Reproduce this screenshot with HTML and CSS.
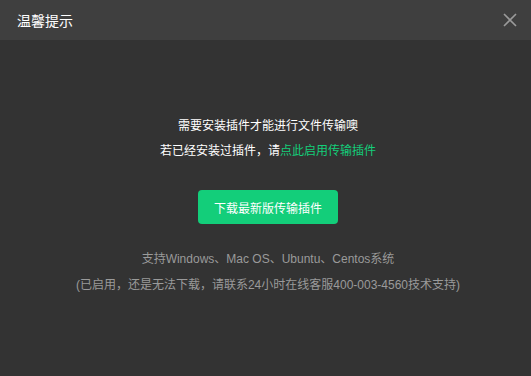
FILE: index.html
```html
<!DOCTYPE html>
<html lang="zh-CN">
<head>
    <meta charset="UTF-8">
    <meta name="viewport" content="width=device-width, initial-scale=1.0">
    <title>温馨提示</title>
    <link rel="stylesheet" href="styles.css">
</head>
<body>
    <div class="dialog">
        <div class="dialog-header">
            <span class="dialog-title">温馨提示</span>
            <span class="dialog-close">
                <svg width="14" height="14" viewBox="0 0 14 14">
                    <path d="M1 1L13 13M13 1L1 13" stroke="#9a9a9a" stroke-width="1.6" fill="none"/>
                </svg>
            </span>
        </div>
        <div class="dialog-body">
            <p class="tip">需要安装插件才能进行文件传输噢</p>
            <p class="tip">若已经安装过插件，请<a class="link" href="#">点此启用传输插件</a></p>
            <button class="btn btn-primary">下载最新版传输插件</button>
            <p class="note">支持Windows、Mac OS、Ubuntu、Centos系统</p>
            <p class="note">(已启用，还是无法下载，请联系24小时在线客服400-003-4560技术支持)</p>
        </div>
    </div>
</body>
</html>
```

FILE: styles.css
```css
body {
    margin: 0;
    font-family: "Liberation Sans", "Noto Sans CJK SC", sans-serif;
    background: #333333;
}

.dialog {
    width: 531px;
    height: 376px;
    background: #333333;
}

.dialog-header {
    height: 40px;
    display: flex;
    align-items: center;
    justify-content: space-between;
    padding: 0 14px 0 17px;
    background: #3f3f3f;
}

.dialog-title {
    color: #ffffff;
    font-size: 14px;
}

.dialog-close {
    display: flex;
    cursor: pointer;
}

.dialog-body {
    display: flex;
    flex-direction: column;
    align-items: center;
    padding: 78px 0 0 5px;
}

.tip {
    margin: 0 0 8px;
    color: #ffffff;
    font-size: 12px;
    line-height: 17px;
}

.link {
    color: #13ce7a;
    text-decoration: none;
}

.btn {
    border: none;
    border-radius: 4px;
    cursor: pointer;
    font-family: inherit;
}

.btn-primary {
    width: 140px;
    height: 34px;
    margin: 22px 0 27px;
    background: #13ce7a;
    color: #ffffff;
    font-size: 12px;
}

.note {
    margin: 0 0 9px;
    color: #9a9a9a;
    font-size: 12px;
    line-height: 17px;
}
```
